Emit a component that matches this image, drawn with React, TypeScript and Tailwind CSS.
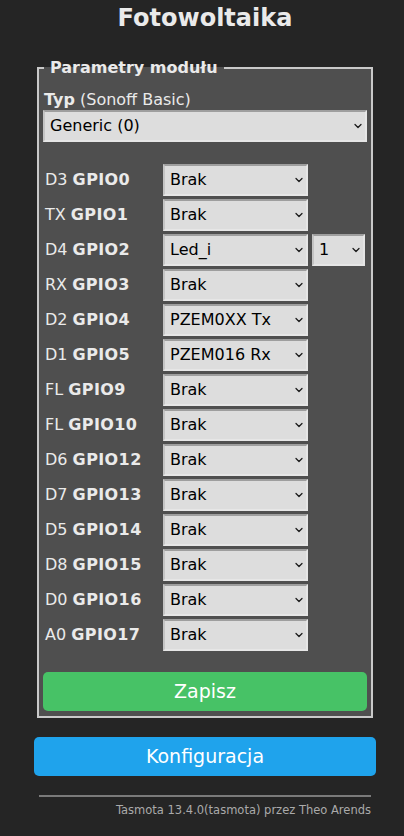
import { ChevronDown } from "lucide-react";

type Pin = { pre: string; gpio: string; value: string; extra?: string };

const pins: Pin[] = [
  { pre: "D3", gpio: "GPIO0", value: "Brak" },
  { pre: "TX", gpio: "GPIO1", value: "Brak" },
  { pre: "D4", gpio: "GPIO2", value: "Led_i", extra: "1" },
  { pre: "RX", gpio: "GPIO3", value: "Brak" },
  { pre: "D2", gpio: "GPIO4", value: "PZEM0XX Tx" },
  { pre: "D1", gpio: "GPIO5", value: "PZEM016 Rx" },
  { pre: "FL", gpio: "GPIO9", value: "Brak" },
  { pre: "FL", gpio: "GPIO10", value: "Brak" },
  { pre: "D6", gpio: "GPIO12", value: "Brak" },
  { pre: "D7", gpio: "GPIO13", value: "Brak" },
  { pre: "D5", gpio: "GPIO14", value: "Brak" },
  { pre: "D8", gpio: "GPIO15", value: "Brak" },
  { pre: "D0", gpio: "GPIO16", value: "Brak" },
  { pre: "A0", gpio: "GPIO17", value: "Brak" },
];

function Select({ value, className }: { value: string; className: string }) {
  return (
    <div className={"relative h-[32px] " + className}>
      <select
        defaultValue={value}
        className="h-full w-full appearance-none border-2 border-t-[#9e9e9e] border-l-[#c4c4c4] border-r-[#e6e6e6] border-b-[#e6e6e6] bg-[#dddddd] pl-[5px] text-[16px] leading-[28px] text-black outline-none"
      >
        <option>{value}</option>
      </select>
      <ChevronDown
        size={12}
        strokeWidth={2.5}
        className="pointer-events-none absolute right-[3px] top-[10px] text-[#1a1a1a]"
      />
    </div>
  );
}

export default function App() {
  return (
    <div className="min-h-[836px] bg-[#252525] font-['DejaVu_Sans',sans-serif] text-[#eaeaea]">
      <div className="ml-[34px] w-[342px]">
        <h2 className="h-[36px] text-center text-[24px] font-bold leading-[36px]">Fotowoltaika</h2>

        <fieldset className="mx-[3px] mt-[22px] border-2 border-[#c9c9c9] bg-[#4f4f4f] px-[4px] pb-[5px] pt-[12px]">
          <legend className="ml-[1px] px-[6px] text-[16px] font-bold leading-[20px]">Parametry modułu</legend>

          <div className="pl-[1px] text-[16px] leading-[20px]">
            <b>Typ</b> (Sonoff Basic)
          </div>
          <Select value="Generic (0)" className="w-full" />

          <div className="mt-[22px] flex flex-col gap-[3px]">
            {pins.map((p) => (
              <div key={p.gpio} className="flex items-center">
                <div className="w-[120px] pl-[2px] text-[16px] leading-[20px]">
                  {p.pre} <b className="tracking-[0.4px]">{p.gpio}</b>
                </div>
                <Select value={p.value} className="w-[145px]" />
                {p.extra && <Select value={p.extra} className="ml-[4px] w-[53px]" />}
              </div>
            ))}
          </div>

          <button className="mt-[21px] h-[39px] w-full rounded-[5px] bg-[#47c266] text-[19px] text-white">
            Zapisz
          </button>
        </fieldset>

        <button className="mt-[19px] h-[39px] w-full rounded-[5px] bg-[#1fa3ec] text-[19px] text-white">
          Konfiguracja
        </button>

        <div className="mx-[5px] mt-[19px] border-t-2 border-[#7a7a7a]" />
        <div className="mt-[5px] pr-[5px] text-right text-[11.5px] leading-[16px] text-[#aaaaaa]">
          Tasmota 13.4.0(tasmota) przez Theo Arends
        </div>
      </div>
    </div>
  );
}
